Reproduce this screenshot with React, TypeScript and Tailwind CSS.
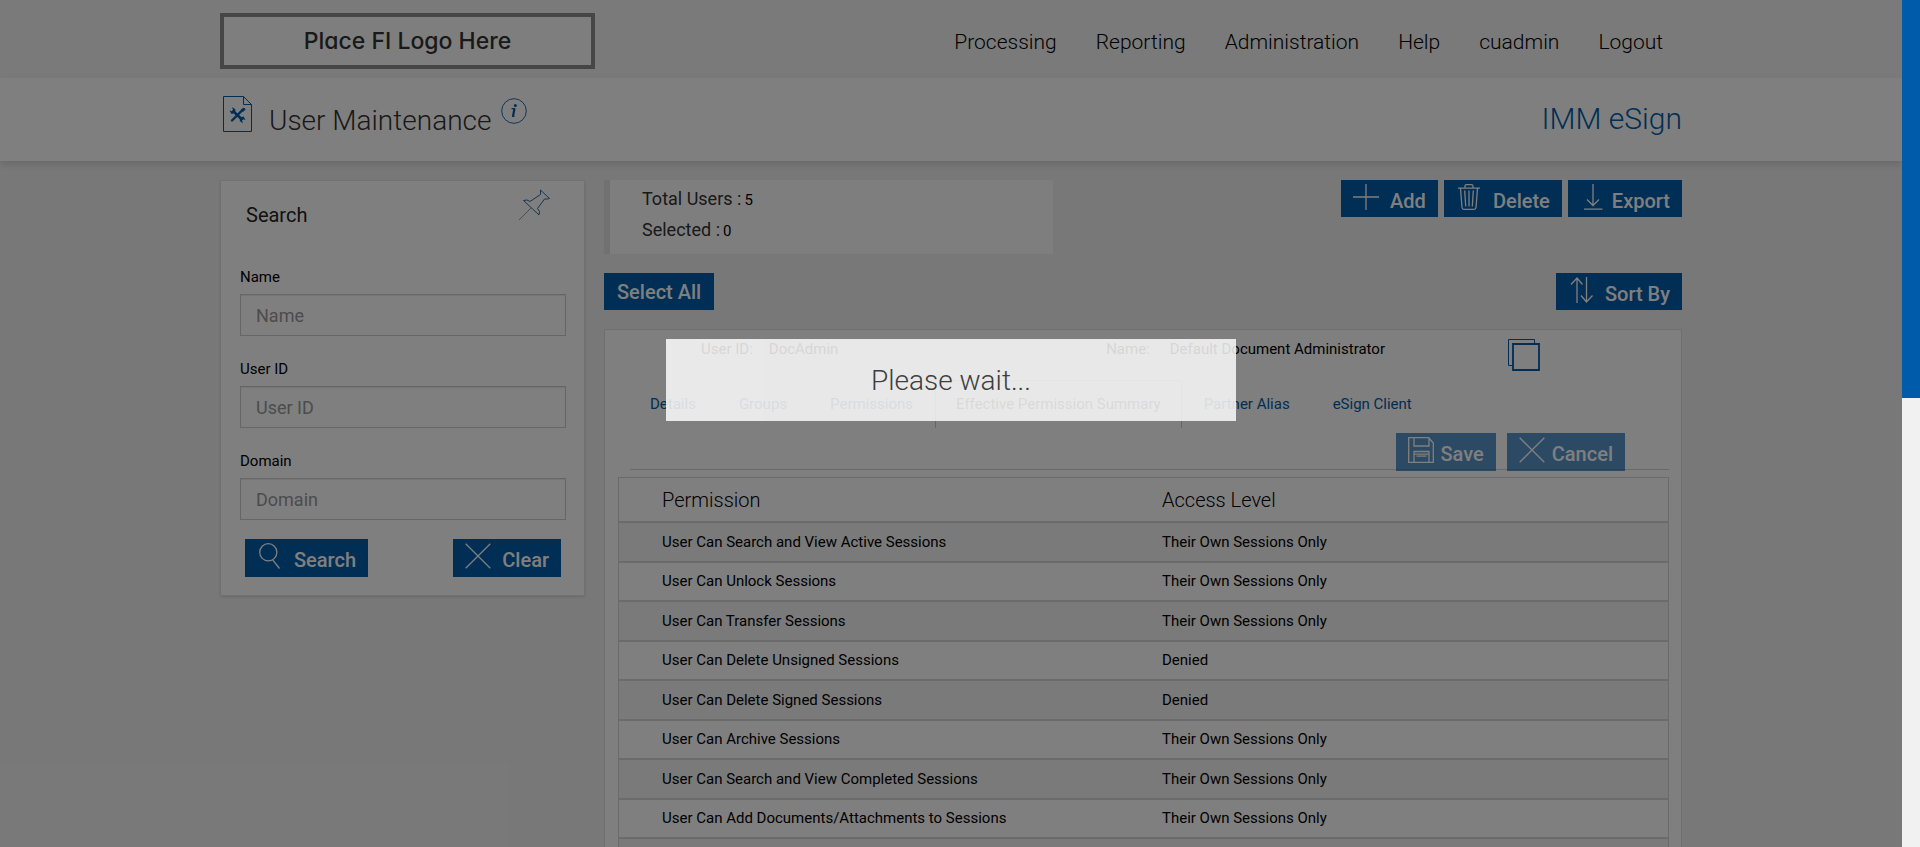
import type { ReactNode } from "react";

const navLinks = ["Processing", "Reporting", "Administration", "Help", "cuadmin", "Logout"];

const searchFields = [
  { id: "name", label: "Name" },
  { id: "user-id", label: "User ID" },
  { id: "domain", label: "Domain" },
];

const tabs = [
  "Details",
  "Groups",
  "Permissions",
  "Effective Permission Summary",
  "Partner Alias",
  "eSign Client",
];
const activeTab = "Effective Permission Summary";

const OWN = "Their Own Sessions Only";
const permissions = [
  { name: "User Can Search and View Active Sessions", access: OWN },
  { name: "User Can Unlock Sessions", access: OWN },
  { name: "User Can Transfer Sessions", access: OWN },
  { name: "User Can Delete Unsigned Sessions", access: "Denied" },
  { name: "User Can Delete Signed Sessions", access: "Denied" },
  { name: "User Can Archive Sessions", access: OWN },
  { name: "User Can Search and View Completed Sessions", access: OWN },
  { name: "User Can Add Documents/Attachments to Sessions", access: OWN },
  { name: "", access: "" },
];

function Icon({ children }: { children: ReactNode }) {
  return (
    <svg viewBox="0 0 26 26" fill="none" stroke="currentColor" strokeWidth="1.3" className="size-[26px]" aria-hidden="true">
      {children}
    </svg>
  );
}

const CrossIcon = () => (
  <Icon>
    <path d="M0.7 0.7 25.3 25.3M25.3 0.7 0.7 25.3" />
  </Icon>
);

const SearchIcon = () => (
  <Icon>
    <circle cx="11.3" cy="9.3" r="8.6" />
    <path d="M15.7 16.8 22.5 25.5" />
  </Icon>
);

const PlusIcon = () => (
  <Icon>
    <path d="M13 0v26M0 13h26" />
  </Icon>
);

const TrashIcon = () => (
  <Icon>
    <path d="M2 4.2h22M9 4V2.2Q9 0.7 10.5 0.7h5Q17 0.7 17 2.2V4M4.5 4.5 6 23.5Q6.2 25.3 8 25.3h10Q19.8 25.3 20 23.5L21.5 4.5M8.7 6.5 9.7 22.5M13 6.5v16M17.3 6.5 16.3 22.5" />
  </Icon>
);

const ExportIcon = () => (
  <Icon>
    <path d="M13 0v21.5M7 15.5l6 6 6-6M4 25.2h18.5" />
  </Icon>
);

const SortIcon = () => (
  <Icon>
    <path d="M9 26V1M3 7.5l6-6.5 5.5 6.5M18.5 0v25M13 18.5l5.5 6.5 6-6.5" />
  </Icon>
);

const SaveIcon = () => (
  <Icon>
    <path d="M0.7 0.7h20L25.3 6v19.3H0.7ZM6 1v8h15V1M6 25V14.5h15V25M6 17.200h15M8.500 19.200h10" />
  </Icon>
);

function ActionButton({
  icon,
  label,
  gap = "gap-[11px]",
  height = "h-[37px]",
  faded = false,
}: {
  icon?: ReactNode;
  label: string;
  gap?: string;
  height?: string;
  faded?: boolean;
}) {
  return (
    <button
      type="button"
      className={`flex items-start bg-[#005caa] pt-1 text-xl font-medium text-white ${icon ? "px-3" : "px-[13px]"} ${height} ${gap} ${faded ? "opacity-65" : ""}`}
    >
      {icon}
      <span className={icon ? "pt-[3px] leading-7" : "leading-[30px]"}>{label}</span>
    </button>
  );
}

function Header() {
  return (
    <header className="border-b border-[#f9f9f9] bg-[#f5f5f5]">
      <div className="mx-auto flex h-[77px] max-w-[1462px] items-start justify-between pt-[13px]">
        <div className="flex h-14 w-[375px] items-center justify-center border-4 border-[#8c8c8c] bg-[#fdfdfd] font-[Inter,sans-serif] text-[23px] font-medium text-[#333] [font-feature-settings:'cv11']">
          Place FI Logo Here
        </div>
        <nav className="flex gap-[39px] pt-[14px] pr-[19px] text-[21px] leading-[30px] font-light text-black">
          {navLinks.map((link) => (
            <a key={link} href="#">
              {link}
            </a>
          ))}
        </nav>
      </div>
    </header>
  );
}

function TitleBar() {
  return (
    <div className="relative bg-white shadow-[0_3px_8px_rgba(0,0,0,0.15)]">
      <div className="mx-auto flex h-[83px] max-w-[1462px] items-start justify-between">
        <div className="flex items-start pl-[3px]">
          <svg viewBox="0 0 29 36" className="mt-[18px] h-9 w-[29px]" fill="none" stroke="#005caa" aria-hidden="true">
            <path d="M0.5 0.5H20.5L28.5 8.5V35.5H0.5ZM20.5 0.5V8.5H28.5" />
            <path d="M9.5 14.5 19.5 24" strokeWidth="2.6" />
            <path d="M19.5 14 9 24.5" strokeWidth="2.4" strokeLinecap="round" />
            <path
              d="M9 11 12.500 13.500 12 17 8.500 18 6.500 14.500 9 15.300 10 14ZM20 27.500 16.800 25 17 21.500 20.500 20.500 22.500 24 20 23.300 19 24.500Z"
              fill="#005caa"
              stroke="none"
            />
            <path d="M18.5 13.5 21 12 22 13.5 20 15.5Z" fill="#005caa" />
          </svg>
          <h1 className="pt-[25px] pl-[17px] text-[28px] leading-9 font-light text-[#333]">User Maintenance</h1>
          <button type="button" aria-label="Information" className="mt-5 ml-2.5 text-[#005caa]">
            <svg viewBox="0 0 26 26" className="size-[26px]" fill="none" stroke="currentColor" aria-hidden="true">
              <circle cx="13" cy="13" r="12.3" strokeWidth="0.9" />
              <path d="M10.5 10.7h3.5M11.2 18.3h2.2" strokeWidth="1.2" />
              <path d="M13.5 10.3 12 18.5" strokeWidth="2.2" />
              <circle cx="14.3" cy="7.5" r="1.5" fill="currentColor" stroke="none" />
            </svg>
          </button>
        </div>
        <div className="pt-[23px] text-[30px] leading-9 font-light text-[#005caa]">IMM eSign</div>
      </div>
    </div>
  );
}

function SearchPanel() {
  return (
    <form className="w-[365px] shrink-0 border border-[#e2e2e2] bg-white pb-[18px] shadow-sm">
      <div className="flex items-start justify-between pt-2 pr-[34px] pl-[25px]">
        <h2 className="pt-3 text-xl leading-7 text-[#222]">Search</h2>
        <svg viewBox="0 0 32 32" className="size-8" fill="none" stroke="#2f6a9c" strokeWidth="1" aria-hidden="true">
          <path d="M22.5 1 31.5 9.5 29.5 10 26.5 10 19.5 19.5 21.5 22.5 21 26 5.5 11.5 9 11 12 12.5 22.5 5.5Z" />
          <path d="M13 19 1 31" stroke="#8a9aa8" />
        </svg>
      </div>
      <div className="flex flex-col gap-[23px] px-[18px] pt-[38px]">
        {searchFields.map((field) => (
          <div key={field.id} className="flex flex-col gap-[7px] pl-px">
            <label htmlFor={field.id} className="text-[15px] leading-5 text-black">
              {field.label}
            </label>
            <input
              id={field.id}
              type="text"
              placeholder={field.label}
              className="h-[42px] w-full border border-[#ccc] bg-white px-[15px] text-lg text-[#555] shadow-[inset_0_1px_1px_rgba(0,0,0,0.08)] placeholder:text-[#999]"
            />
          </div>
        ))}
      </div>
      <div className="flex justify-between pt-[19px] pr-[23px] pl-6">
        <ActionButton icon={<SearchIcon />} label="Search" height="h-[38px]" />
        <ActionButton icon={<CrossIcon />} label="Clear" height="h-[38px]" />
      </div>
    </form>
  );
}

function Toolbar() {
  return (
    <>
      <div className="flex items-start justify-between">
        <dl className="h-[74px] w-[449px] border-l-[6px] border-[#e3e3e3] bg-[#fdfdfd] pt-[3px] pl-8 text-[#333]">
          {[
            ["Total Users", "5"],
            ["Selected", "0"],
          ].map(([term, value]) => (
            <div key={term} className="flex h-[31px] items-baseline gap-[3px]">
              <dt className="text-lg leading-[31px]">{term} :</dt>
              <dd className="text-[15px] leading-[31px] text-black">{value}</dd>
            </div>
          ))}
        </dl>
        <div className="flex gap-1.5">
          <ActionButton icon={<PlusIcon />} label="Add" />
          <ActionButton icon={<TrashIcon />} label="Delete" />
          <ActionButton icon={<ExportIcon />} label="Export" gap="gap-1.5" />
        </div>
      </div>
      <div className="flex justify-between pt-[19px] pb-[19px]">
        <ActionButton label="Select All" />
        <ActionButton icon={<SortIcon />} label="Sort By" />
      </div>
    </>
  );
}

function UserCard() {
  return (
    <section className="border border-[#dedede] bg-white">
      <div className="flex items-start pt-[9px] pl-24 text-[15px] leading-5 text-black">
        <dl className="flex gap-4">
          <dt>User ID:</dt>
          <dd>DocAdmin</dd>
        </dl>
        <dl className="ml-auto flex gap-5">
          <dt>Name:</dt>
          <dd>Default Document Administrator</dd>
        </dl>
        <button type="button" aria-label="Copy user" className="mr-[141px] ml-[123px] text-[#005caa]">
          <svg viewBox="0 0 32 32" className="size-8" fill="none" stroke="currentColor" aria-hidden="true">
            <path d="M5 26.5H0.5V0.5H26.5V4.5" strokeWidth="1" />
            <path d="M5 5h26v26H5Z" strokeWidth="1.8" />
          </svg>
        </button>
      </div>
      <div className="mr-3 ml-[25px] flex flex-col border-b border-[#d2d2d2] pt-[9px]">
        <div role="tablist" className="-ml-px flex h-12 gap-px">
          {tabs.map((tab) => (
            <button
              key={tab}
              type="button"
              role="tab"
              aria-selected={tab === activeTab}
              className={`rounded-t border border-b-0 px-5 text-[15px] ${
                tab === activeTab ? "border-[#ccc] text-[#333]" : "border-transparent text-[#005caa]"
              }`}
            >
              {tab}
            </button>
          ))}
        </div>
        <div className="-mb-0.5 flex justify-end gap-[11px] pt-[5px] pr-11">
          <ActionButton icon={<SaveIcon />} label="Save" gap="gap-[7px]" height="h-[38px]" faded />
          <ActionButton icon={<CrossIcon />} label="Cancel" gap="gap-[7px]" height="h-[38px]" faded />
        </div>
      </div>
      <div className="pt-[7px] pr-3 pl-[13px]">
        <table className="w-full table-fixed border-separate border-spacing-0 border-x border-t border-[#d6d6d6] text-left text-[15px] text-black">
          <thead>
            <tr className="h-[45px]">
              <th className="w-[500px] border-b-2 border-[#d6d6d6] pl-[43px] text-xl font-light">Permission</th>
              <th className="border-b-2 border-[#d6d6d6] pl-[43px] text-xl font-light">Access Level</th>
            </tr>
          </thead>
          <tbody>
            {permissions.map((row, index) => (
              <tr key={index} className="odd:h-10 odd:bg-[#f4f4f4] even:h-[39px]">
                <td className="border-b-2 border-[#d6d6d6] pl-[43px]">{row.name}</td>
                <td className="border-b-2 border-[#d6d6d6] pl-[43px]">{row.access}</td>
              </tr>
            ))}
          </tbody>
        </table>
      </div>
    </section>
  );
}

export default function App() {
  return (
    <div className="flex h-screen overflow-hidden bg-[#f1f1f1] font-[Roboto,sans-serif]">
      <div className="relative min-w-0 flex-1 overflow-hidden">
        <Header />
        <TitleBar />
        <main className="mx-auto flex max-w-[1462px] items-start gap-[19px] pt-[19px]">
          <SearchPanel />
          <div className="min-w-0 flex-1">
            <Toolbar />
            <UserCard />
          </div>
        </main>
        <div className="absolute inset-0 bg-black/50" />
        <div
          role="status"
          className="absolute top-[40%] left-[35%] w-[30%] bg-[#fbfbfb] pt-[21px] pb-[19px] text-center text-[28px] leading-[42px] font-light text-[#333] opacity-85"
        >
          Please wait...
        </div>
      </div>
      <div className="w-[18px] shrink-0 bg-[#f1f1f1]">
        <div className="h-[47%] bg-[#005caa]" />
      </div>
    </div>
  );
}
